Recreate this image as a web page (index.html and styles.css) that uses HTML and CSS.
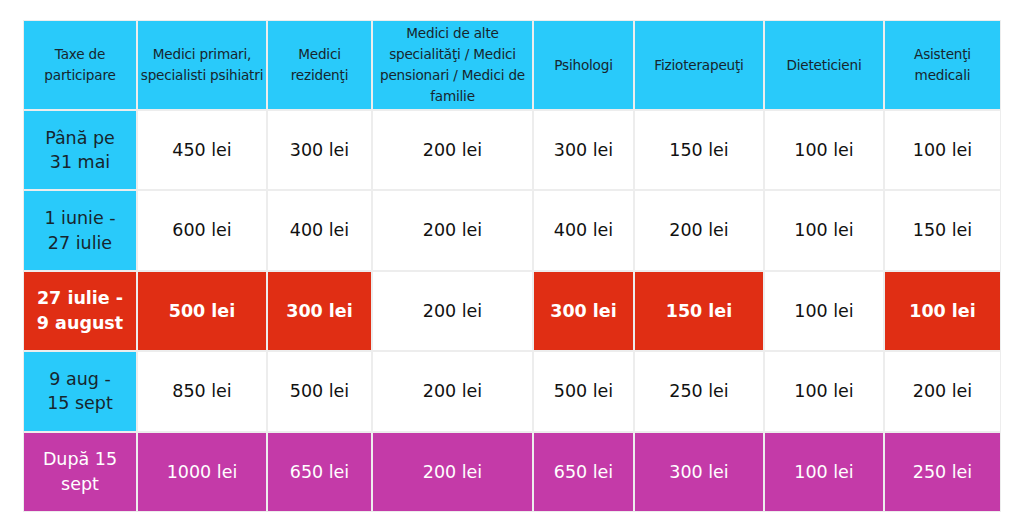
FILE: index.html
```html
<!DOCTYPE html>
<html lang="ro">
<head>
<meta charset="utf-8">
<title>Taxe de participare</title>
<link rel="stylesheet" href="styles.css">
</head>
<body>
<table class="fees">
  <colgroup>
    <col class="c1"><col class="c2"><col class="c3"><col class="c4"><col class="c5"><col class="c6"><col class="c7"><col class="c8">
  </colgroup>
  <thead>
    <tr class="head">
      <th>Taxe de<br>participare</th>
      <th>Medici primari,<br>specialisti psihiatri</th>
      <th>Medici<br>rezidenţi</th>
      <th>Medici de alte<br>specialităţi / Medici<br>pensionari / Medici de<br>familie</th>
      <th>Psihologi</th>
      <th>Fizioterapeuţi</th>
      <th>Dieteticieni</th>
      <th>Asistenţi<br>medicali</th>
    </tr>
  </thead>
  <tbody>
    <tr class="row">
      <th class="period">Până pe<br>31 mai</th>
      <td>450 lei</td><td>300 lei</td><td>200 lei</td><td>300 lei</td><td>150 lei</td><td>100 lei</td><td>100 lei</td>
    </tr>
    <tr class="row">
      <th class="period">1 iunie -<br>27 iulie</th>
      <td>600 lei</td><td>400 lei</td><td>200 lei</td><td>400 lei</td><td>200 lei</td><td>100 lei</td><td>150 lei</td>
    </tr>
    <tr class="row promo">
      <th class="period red">27 iulie -<br>9 august</th>
      <td class="red">500 lei</td><td class="red">300 lei</td><td>200 lei</td><td class="red">300 lei</td><td class="red">150 lei</td><td>100 lei</td><td class="red">100 lei</td>
    </tr>
    <tr class="row">
      <th class="period">9 aug -<br>15 sept</th>
      <td>850 lei</td><td>500 lei</td><td>200 lei</td><td>500 lei</td><td>250 lei</td><td>100 lei</td><td>200 lei</td>
    </tr>
    <tr class="row late">
      <th class="period purple">După 15<br>sept</th>
      <td class="purple">1000 lei</td><td class="purple">650 lei</td><td class="purple">200 lei</td><td class="purple">650 lei</td><td class="purple">300 lei</td><td class="purple">100 lei</td><td class="purple">250 lei</td>
    </tr>
  </tbody>
</table>
</body>
</html>
```
FILE: styles.css
```css
html, body {
  margin: 0;
  padding: 0;
  background: #ffffff;
}

body {
  padding: 20px 0 0 23px;
  font-family: "DejaVu Sans", "Noto Sans", sans-serif;
}

.fees {
  border-collapse: separate;
  border-spacing: 0;
  table-layout: fixed;
  width: 978px;
}

.c1 { width: 114px; }
.c2 { width: 130px; }
.c3 { width: 105px; }
.c4 { width: 161px; }
.c5 { width: 101px; }
.c6 { width: 130px; }
.c7 { width: 120px; }
.c8 { width: 117px; }

.fees th,
.fees td {
  border: 1px solid #ededed;
  padding: 0 2px;
  text-align: center;
  vertical-align: middle;
  white-space: nowrap;
  overflow: hidden;
}

.head th {
  height: 88px;
  background: #29cafa;
  color: #17262e;
  font-weight: 400;
  font-size: 13.6px;
  line-height: 21px;
  letter-spacing: -0.2px;
}

.row th,
.row td {
  height: 78.4px;
  background: #ffffff;
  color: #111111;
  font-weight: 400;
  font-size: 17.5px;
  line-height: 24.5px;
}

.row th.period {
  background: #29cafa;
  color: #17262e;
}

.row .red,
.row th.period.red {
  background: #e02e14;
  color: #ffffff;
  font-weight: 700;
}

.row .purple,
.row th.period.purple {
  background: #c43aa8;
  color: #ffffff;
}
```
